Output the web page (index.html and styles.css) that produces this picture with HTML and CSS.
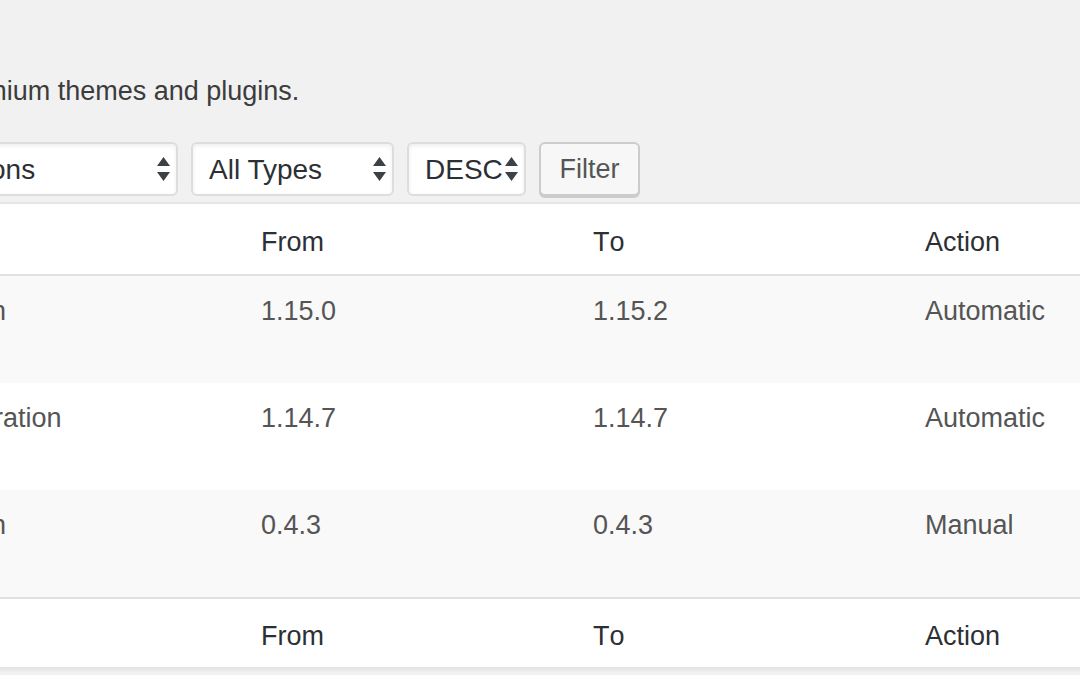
FILE: index.html
```html
<!DOCTYPE html>
<html lang="en">
<head>
  <meta charset="UTF-8">
  <meta name="viewport" content="width=device-width, initial-scale=1.0">
  <title>Update History</title>
  <link rel="stylesheet" href="styles.css">
</head>
<body>
  <div class="wrap">
    <p class="desc">Update history of all your premium themes and plugins.</p>

    <form class="tablenav">
      <label class="select-box box-plugin">
        <select><option>All Plugins</option></select>
        <svg viewBox="0 0 13 24"><path d="M0 9 6.5 0 13 9Z M0 15H13L6.5 24Z"/></svg>
      </label>
      <label class="select-box box-action">
        <select><option>All Actions</option><option>Automatic</option><option>Manual</option></select>
        <svg viewBox="0 0 13 24"><path d="M0 9 6.5 0 13 9Z M0 15H13L6.5 24Z"/></svg>
      </label>
      <label class="select-box box-type">
        <select><option>All Types</option><option>Plugins</option><option>Themes</option></select>
        <svg viewBox="0 0 13 24"><path d="M0 9 6.5 0 13 9Z M0 15H13L6.5 24Z"/></svg>
      </label>
      <label class="select-box box-order">
        <select><option>DESC</option><option>ASC</option></select>
        <svg viewBox="0 0 13 24"><path d="M0 9 6.5 0 13 9Z M0 15H13L6.5 24Z"/></svg>
      </label>
      <button type="button" class="button">Filter</button>
    </form>

    <table class="history">
      <colgroup>
        <col class="col-name"><col class="col-ver"><col class="col-ver"><col class="col-ver">
      </colgroup>
      <thead>
        <tr><th>Name</th><th>From</th><th>To</th><th>Action</th></tr>
      </thead>
      <tbody>
        <tr><td>Gravity Forms Stripe Add-On</td><td>1.15.0</td><td>1.15.2</td><td>Automatic</td></tr>
        <tr><td>Gravity Forms Discord Integration</td><td>1.14.7</td><td>1.14.7</td><td>Automatic</td></tr>
        <tr><td>Gravity Forms Mollie Add-On</td><td>0.4.3</td><td>0.4.3</td><td>Manual</td></tr>
      </tbody>
      <tfoot>
        <tr><th>Name</th><th>From</th><th>To</th><th>Action</th></tr>
      </tfoot>
    </table>
  </div>
</body>
</html>
```

FILE: styles.css
```css
html, body { margin:0; padding:0; height:100%; overflow:hidden; background:#f1f1f1; font-family:"Liberation Sans", Arial, sans-serif; font-kerning:none; color:#444; }
.wrap { margin-left:-361px; padding-top:71px; }
.desc { margin:0; font-size:27px; line-height:40px; color:#3c3c3c; }

.tablenav { display:flex; gap:13px; height:54px; margin:31px 0 0; }
.select-box { position:relative; display:block; }
.select-box select { -webkit-appearance:none; appearance:none; display:block; width:100%; height:54px; margin:0; padding:0 36px 0 16px; border:2px solid #ddd; border-radius:6px; background:#fff; box-shadow:inset 0 2px 4px rgba(0,0,0,.07); font:28px "Liberation Sans", Arial, sans-serif; color:#2c3034; outline:none; }
.select-box svg { position:absolute; right:8px; top:15px; width:13px; height:24px; fill:#3c4146; pointer-events:none; }
.box-plugin { width:236px; }
.box-action { width:290px; }
.box-type { width:203px; }
.box-order { width:119px; }
.box-order select { padding-right:4px; }
.button { width:101px; height:54px; padding:0; border:2px solid #ccc; border-radius:6px; background:#f7f7f7; box-shadow:0 2px 0 #ccc; font:27px "Liberation Sans", Arial, sans-serif; color:#555; }

.history { width:1598px; margin-top:6px; table-layout:fixed; border-collapse:separate; border-spacing:0; background:#fff; border:2px solid #e5e5e5; box-shadow:0 2px 2px rgba(0,0,0,.04); font-size:27px; line-height:40px; }
.col-name { width:600px; }
.col-ver { width:332px; }
.history th { text-align:left; font-weight:normal; color:#2c3034; padding:18px 20px 12px; white-space:nowrap; }
.history thead th { border-bottom:2px solid #e1e1e1; }
.history tfoot th { border-top:2px solid #e1e1e1; padding:17px 20px 11px; }
.history td { padding:15px 20px 52px; color:#555; vertical-align:top; white-space:nowrap; }
.history th:first-child, .history td:first-child { padding-left:17px; }
.history tbody tr:nth-child(odd) { background:#f9f9f9; }
```
